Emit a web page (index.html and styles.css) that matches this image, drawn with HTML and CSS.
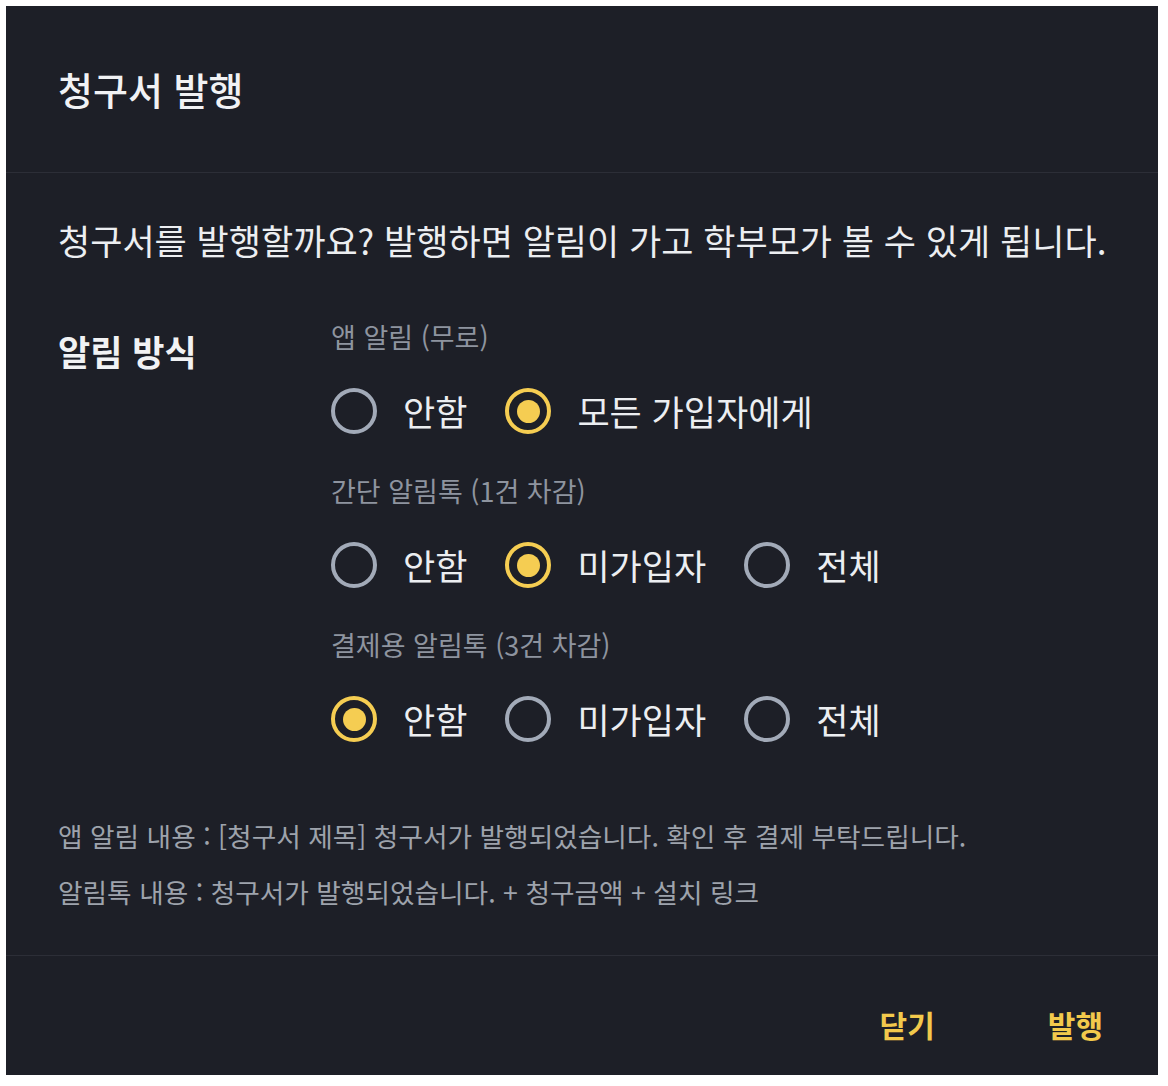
FILE: index.html
```html
<!DOCTYPE html>
<html lang="ko">
<head>
<meta charset="utf-8">
<title>청구서 발행</title>
<link rel="stylesheet" href="styles.css">
</head>
<body>
<div class="dialog">
  <header class="dialog-header">
    <h1 class="dialog-title">청구서 발행</h1>
  </header>
  <section class="dialog-content">
    <p class="lead">청구서를 발행할까요? 발행하면 알림이 가고 학부모가 볼 수 있게 됩니다.</p>
    <div class="method">
      <div class="method-label">알림 방식</div>
      <div class="groups">
        <div class="group">
          <div class="group-title">앱 알림 (무로)</div>
          <div class="radios">
            <label class="radio"><span class="circle"></span><span class="radio-text">안함</span></label>
            <label class="radio checked"><span class="circle"></span><span class="radio-text">모든 가입자에게</span></label>
          </div>
        </div>
        <div class="group">
          <div class="group-title">간단 알림톡 (1건 차감)</div>
          <div class="radios">
            <label class="radio"><span class="circle"></span><span class="radio-text">안함</span></label>
            <label class="radio checked"><span class="circle"></span><span class="radio-text">미가입자</span></label>
            <label class="radio"><span class="circle"></span><span class="radio-text">전체</span></label>
          </div>
        </div>
        <div class="group">
          <div class="group-title">결제용 알림톡 (3건 차감)</div>
          <div class="radios">
            <label class="radio checked"><span class="circle"></span><span class="radio-text">안함</span></label>
            <label class="radio"><span class="circle"></span><span class="radio-text">미가입자</span></label>
            <label class="radio"><span class="circle"></span><span class="radio-text">전체</span></label>
          </div>
        </div>
      </div>
    </div>
    <div class="notes">
      <p class="note">앱 알림 내용 : [청구서 제목] 청구서가 발행되었습니다. 확인 후 결제 부탁드립니다.</p>
      <p class="note">알림톡 내용 : 청구서가 발행되었습니다. + 청구금액 + 설치 링크</p>
    </div>
  </section>
  <footer class="dialog-actions">
    <button class="btn">닫기</button>
    <button class="btn">발행</button>
  </footer>
</div>
</body>
</html>
```
FILE: styles.css
```css
html, body {
  margin: 0;
  padding: 0;
  background: #ffffff;
}
body {
  padding: 6px 10px 11px 6px;
  font-family: "Noto Sans CJK KR", "Noto Sans", sans-serif;
}
.dialog {
  width: 1152px;
  height: 1069px;
  background: #1d1f27;
  display: flex;
  flex-direction: column;
  box-sizing: border-box;
}
.dialog-header {
  padding: 56px 52px;
  border-bottom: 1px solid #2c2e37;
}
.dialog-title {
  margin: 0;
  font-size: 38px;
  line-height: 54px;
  font-weight: 500;
  color: #f1f2f4;
}
.dialog-content {
  padding: 43px 52px 43px 52px;
  border-bottom: 1px solid #2c2e37;
}
.lead {
  margin: 0;
  font-size: 35px;
  line-height: 48px;
  color: #eceef1;
  white-space: nowrap;
}
.method {
  display: grid;
  grid-template-columns: 273px 1fr;
  margin-top: 53px;
}
.method-label {
  margin-top: 10px;
  font-size: 35px;
  line-height: 48px;
  font-weight: 700;
  color: #f1f2f4;
}
.groups {
  display: flex;
  flex-direction: column;
  gap: 37px;
}
.group-title {
  font-size: 27px;
  line-height: 40px;
  color: #8e949f;
  margin-bottom: 31px;
}
.radios {
  display: flex;
  align-items: center;
  height: 46px;
}
.radio {
  display: flex;
  align-items: center;
  margin-right: 38px;
}
.circle {
  width: 46px;
  height: 46px;
  box-sizing: border-box;
  border: 4px solid #a2aab8;
  border-radius: 50%;
  display: flex;
  align-items: center;
  justify-content: center;
  flex: none;
}
.radio.checked .circle {
  border-color: #f5cd52;
}
.radio.checked .circle::after {
  content: "";
  width: 23px;
  height: 23px;
  border-radius: 50%;
  background: #f5cd52;
}
.radio-text {
  margin-left: 26px;
  font-size: 35px;
  line-height: 46px;
  color: #eceef1;
}
.notes {
  margin-top: 74px;
  display: flex;
  flex-direction: column;
  gap: 16px;
}
.note {
  margin: 0;
  font-size: 26.7px;
  line-height: 40px;
  color: #9ea3ac;
}
.dialog-actions {
  flex: 1;
  display: flex;
  justify-content: flex-end;
  align-items: flex-start;
  gap: 41px;
  padding: 40px 19px 0 0;
}
.btn {
  background: none;
  border: none;
  padding: 0 36px;
  height: 56px;
  font-family: "Noto Sans CJK KR", "Noto Sans", sans-serif;
  font-size: 30px;
  font-weight: 700;
  color: #f2c94c;
  cursor: pointer;
}
```
